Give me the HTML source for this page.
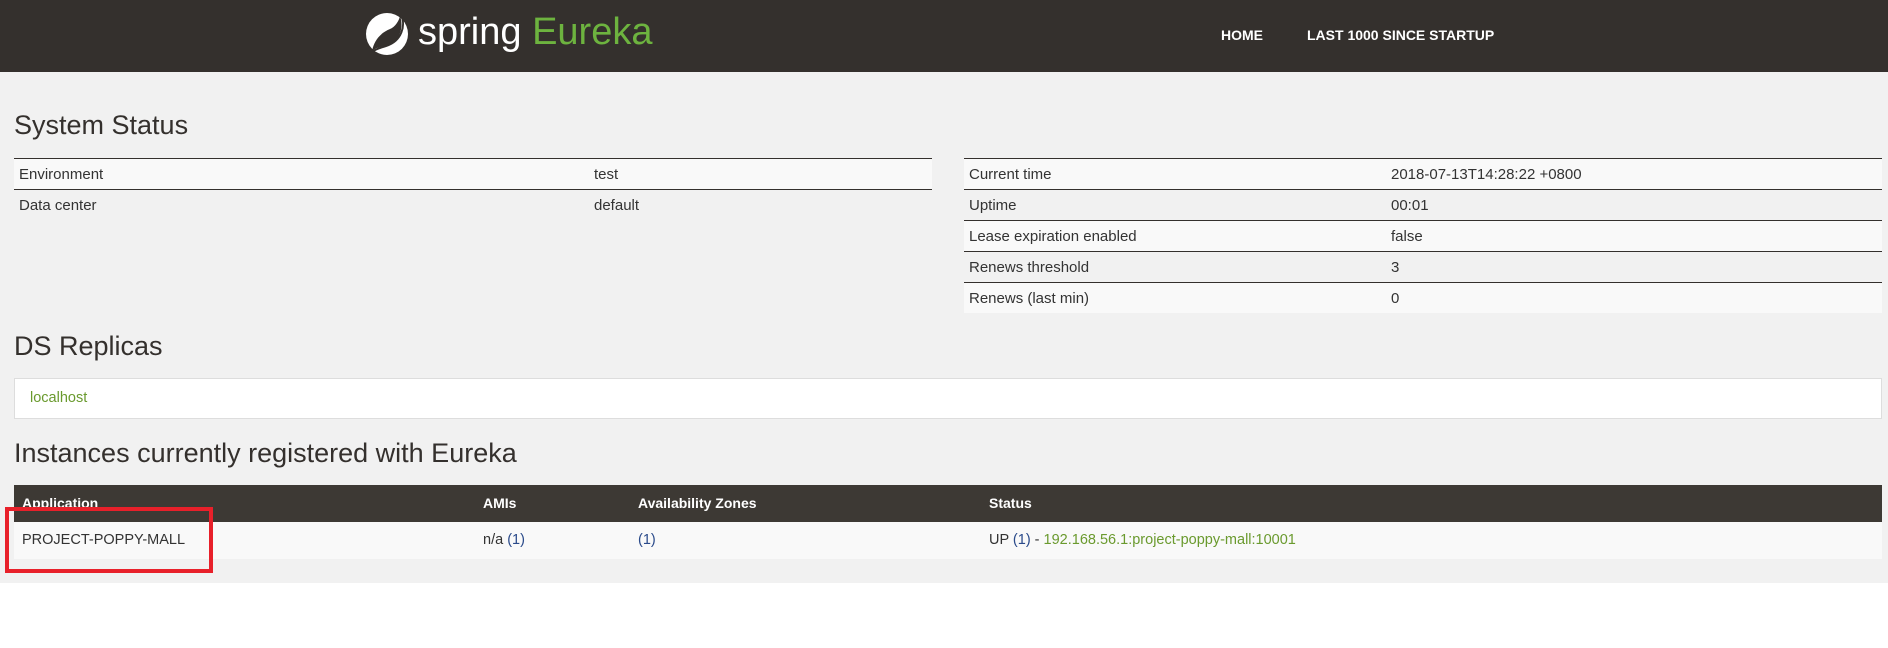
<!DOCTYPE html>
<html><head><meta charset="utf-8"><style>
*{margin:0;padding:0;box-sizing:border-box}
body{width:1888px;height:648px;background:#fff;font-family:"Liberation Sans",sans-serif;color:#333;position:relative;overflow:hidden}
.hdr{position:absolute;left:0;top:0;width:1888px;height:72px;background:#34302d}
.main{position:absolute;left:0;top:72px;width:1888px;height:511px;background:#f1f1f1}
.a{position:absolute;white-space:nowrap}
h2{position:absolute;font-weight:normal;font-size:27px;color:#34302d;white-space:nowrap;left:14px}
.t{position:absolute;font-size:14.5px}
.row{position:absolute;height:31px;border-top:1px solid #34302d;font-size:15px}
.row span{position:absolute;top:7px}
.nav{color:#fff;font-weight:bold;font-size:14px;top:27px}
</style></head><body>
<div class="hdr">
<svg class="a" style="left:364px;top:11px" width="46" height="46" viewBox="0 0 46 46">
<circle cx="23" cy="23" r="21" fill="#fff"/>
<path d="M36 5 C40 16 36 30 24 34 C18 36 12 36 8 40 C10 30 16 22 26 18 C31 16 35 10 36 5Z" fill="#34302d"/>
<path d="M37 4 C42 14 38 30 22 35 C16 37 11 38 8 41" stroke="#34302d" stroke-width="2" fill="none"/>
</svg>
<div class="a" style="left:418px;top:11px;font-size:38px;color:#fff">spring <span style="color:#6db33f">Eureka</span></div>
<div class="a nav" style="left:1221px">HOME</div>
<div class="a nav" style="left:1307px">LAST 1000 SINCE STARTUP</div>
</div>
<div class="main"></div>
<h2 style="top:110px">System Status</h2>
<div class="row" style="left:14px;top:158px;width:918px;background:#f9f9f9"><span style="left:5px">Environment</span><span style="left:580px">test</span></div>
<div class="row" style="left:14px;top:189px;width:918px"><span style="left:5px">Data center</span><span style="left:580px">default</span></div>
<div class="row" style="left:964px;top:158px;width:918px;background:#f9f9f9"><span style="left:5px">Current time</span><span style="left:427px">2018-07-13T14:28:22 +0800</span></div>
<div class="row" style="left:964px;top:189px;width:918px"><span style="left:5px">Uptime</span><span style="left:427px">00:01</span></div>
<div class="row" style="left:964px;top:220px;width:918px;background:#f9f9f9"><span style="left:5px">Lease expiration enabled</span><span style="left:427px">false</span></div>
<div class="row" style="left:964px;top:251px;width:918px"><span style="left:5px">Renews threshold</span><span style="left:427px">3</span></div>
<div class="row" style="left:964px;top:282px;width:918px;height:31px;background:#f9f9f9"><span style="left:5px">Renews (last min)</span><span style="left:427px">0</span></div>
<h2 style="top:331px">DS Replicas</h2>
<div class="a" style="left:14px;top:378px;width:1868px;height:41px;background:#fff;border:1px solid #ddd"><span class="a t" style="left:15px;top:11px;color:#6a9a2e">localhost</span></div>
<h2 style="top:438px">Instances currently registered with Eureka</h2>
<div class="a" style="left:14px;top:485px;width:1868px;height:37px;background:#3d3934;color:#fff;font-weight:bold;font-size:14px">
<span class="a" style="left:8px;top:10px">Application</span><span class="a" style="left:469px;top:10px">AMIs</span><span class="a" style="left:624px;top:10px">Availability Zones</span><span class="a" style="left:975px;top:10px">Status</span></div>
<div class="a t" style="left:14px;top:522px;width:1868px;height:37px;background:#f9f9f9">
<span class="a" style="left:8px;top:10px">PROJECT-POPPY-MALL</span><span class="a" style="left:469px;top:10px">n/a <span style="color:#2a4a8a">(1)</span></span><span class="a" style="left:624px;top:10px;color:#2a4a8a">(1)</span><span class="a" style="left:975px;top:10px">UP <span style="color:#2a4a8a">(1)</span> - <span style="color:#6a9a2e">192.168.56.1:project-poppy-mall:10001</span></span></div>
<div class="a" style="left:5px;top:507px;width:208px;height:66px;border:4px solid #e8202a"></div>
</body></html>
